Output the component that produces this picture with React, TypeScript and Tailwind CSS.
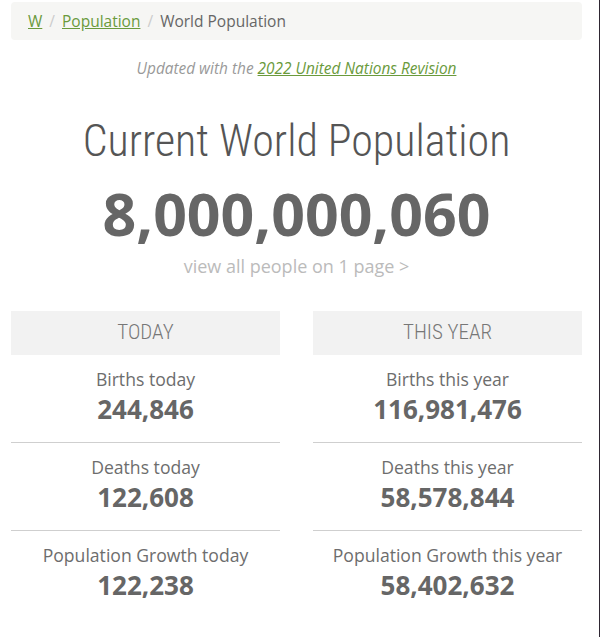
const stats = [
  {
    title: "TODAY",
    rows: [
      ["Births today", "244,846"],
      ["Deaths today", "122,608"],
      ["Population Growth today", "122,238"],
    ],
  },
  {
    title: "THIS YEAR",
    rows: [
      ["Births this year", "116,981,476"],
      ["Deaths this year", "58,578,844"],
      ["Population Growth this year", "58,402,632"],
    ],
  },
];

function StatColumn({ title, rows }: { title: string; rows: string[][] }) {
  return (
    <div className="flex flex-col">
      <div
        className="h-[44px] flex items-center justify-center bg-[#f2f2f2] text-[21px] text-[#777] font-light [font-stretch:condensed]"
        style={{ fontFamily: "Roboto, sans-serif" }}
      >
        {title}
      </div>
      {rows.map(([label, value], i) => (
        <div
          key={label}
          className={`flex flex-col items-center pt-[11px] h-[88px] ${
            i < rows.length - 1 ? "border-b border-[#cfcfcf]" : ""
          }`}
        >
          <div className="text-[17.6px] leading-[26px] text-[#6d6d6d]">{label}</div>
          <div className="text-[26px] leading-[34px] font-bold text-[#666]">{value}</div>
        </div>
      ))}
    </div>
  );
}

export default function App() {
  return (
    <div
      className="w-[600px] h-[637px] bg-white border-r border-[#2e2632]"
      style={{ fontFamily: "'Open Sans', sans-serif" }}
    >
      <div className="pl-[11px] pr-[17px] pt-[2px]">
        <nav className="h-[38px] rounded bg-[#f6f6f4] flex items-center pt-[2px] px-[17px] text-[15.5px] text-[#666]">
          <a className="text-[#6a9a3c] underline">W</a>
          <span className="mx-[7px] text-[#ccc]">/</span>
          <a className="text-[#6a9a3c] underline">Population</a>
          <span className="mx-[7px] text-[#ccc]">/</span>
          <span>World Population</span>
        </nav>

        <p className="mt-[18px] text-center text-[15.4px] leading-[22px] italic text-[#999]">
          Updated with the{" "}
          <a className="text-[#6a9a3c] underline">2022 United Nations Revision</a>
        </p>

        <h1
          className="mt-[35px] text-center text-[44px] leading-[52px] font-light text-[#555] [font-stretch:condensed]"
          style={{ fontFamily: "Roboto, sans-serif" }}
        >
          Current World Population
        </h1>
        <div className="mt-[11px] text-center text-[59px] leading-[70px] font-bold text-[#666]">
          8,000,000,060
        </div>
        <div className="mt-[5px] text-center text-[18px] leading-[26px] text-[#bbb]">
          view all people on 1 page &gt;
        </div>

        <div className="mt-[32px] grid grid-cols-2 gap-[33px]">
          {stats.map((s) => (
            <StatColumn key={s.title} title={s.title} rows={s.rows} />
          ))}
        </div>
      </div>
    </div>
  );
}
